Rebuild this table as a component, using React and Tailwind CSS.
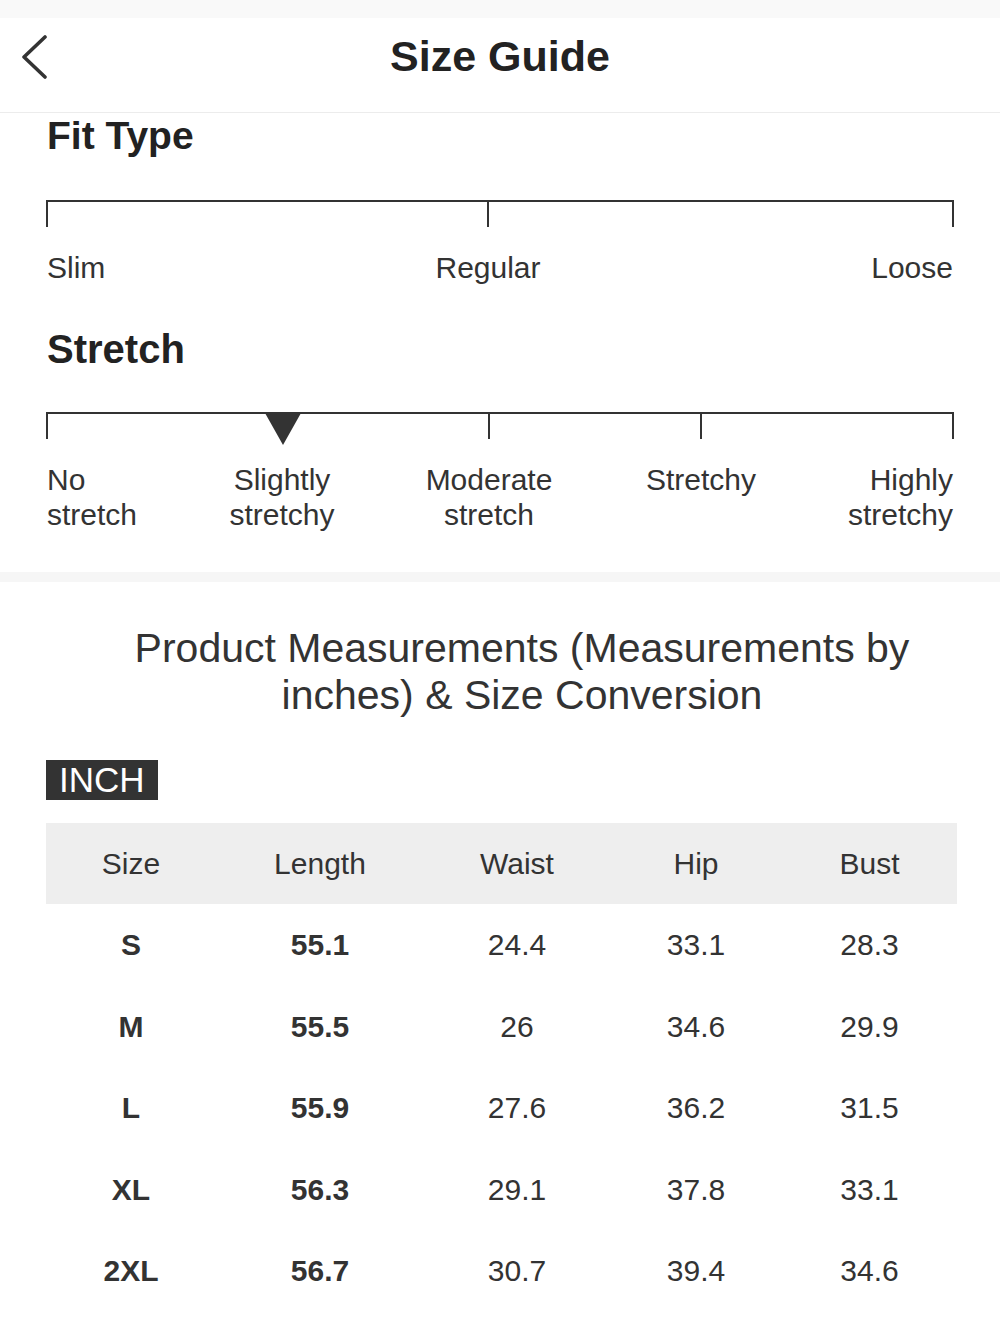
const font = { fontFamily: '"Liberation Sans", Arial, sans-serif' };

const rows = [
  ["S", "55.1", "24.4", "33.1", "28.3"],
  ["M", "55.5", "26", "34.6", "29.9"],
  ["L", "55.9", "27.6", "36.2", "31.5"],
  ["XL", "56.3", "29.1", "37.8", "33.1"],
  ["2XL", "56.7", "30.7", "39.4", "34.6"],
];

const cols = "grid grid-cols-[170px_208px_186px_172px_175px]";

function Scale({ ticks, marker }) {
  return (
    <svg width="908" height="34" viewBox="0 0 908 34" className="block">
      <line x1="0" y1="1" x2="908" y2="1" stroke="#333" strokeWidth="2" />
      {ticks.map((x) => (
        <line key={x} x1={x} y1="0" x2={x} y2="27" stroke="#333" strokeWidth="2" />
      ))}
      {marker != null && (
        <polygon points={`${marker - 18},1 ${marker + 18},1 ${marker},33`} fill="#333" />
      )}
    </svg>
  );
}

export default function App() {
  return (
    <div className="w-[1000px] min-h-[1333px] bg-white text-[#333]" style={font}>
      {/* top status strip */}
      <div className="h-[18px] bg-[#f9f9f9]" />

      {/* header */}
      <div className="relative h-[95px] border-b border-[#ececec] flex justify-center pt-[13px]">
        <svg
          className="absolute left-[20px] top-[17px]"
          width="30"
          height="44"
          viewBox="0 0 30 44"
          fill="none"
        >
          <polyline
            points="25,2 4,22 25,42"
            stroke="#333"
            strokeWidth="3.6"
            strokeLinecap="round"
            strokeLinejoin="round"
          />
        </svg>
        <h1 className="text-[43px] leading-[50px] font-bold text-[#222]">Size Guide</h1>
      </div>

      {/* fit + stretch */}
      <div className="px-[46px]">
        <h2 className="text-[39px] leading-[46px] font-bold text-[#222] pl-px">Fit Type</h2>
        <div className="mt-[41px]">
          <Scale ticks={[1, 442, 907]} />
        </div>
        <div className="relative h-[35px] mt-[16px] text-[30px] leading-[35px]">
          <span className="absolute left-px top-0">Slim</span>
          <span className="absolute left-[442px] top-0 -translate-x-1/2">Regular</span>
          <span className="absolute right-px top-0">Loose</span>
        </div>

        <h2 className="mt-[41px] text-[40px] leading-[46px] font-bold text-[#222] pl-px">Stretch</h2>
        <div className="mt-[40px]">
          <Scale ticks={[1, 443, 655, 907]} marker={237} />
        </div>
        <div className="relative h-[70px] mt-[16px] text-[30px] leading-[35px]">
          <span className="absolute left-px top-0">
            No
            <br />
            stretch
          </span>
          <span className="absolute left-[236px] top-0 -translate-x-1/2 text-center whitespace-nowrap">
            Slightly
            <br />
            stretchy
          </span>
          <span className="absolute left-[443px] top-0 -translate-x-1/2 text-center whitespace-nowrap">
            Moderate
            <br />
            stretch
          </span>
          <span className="absolute left-[655px] top-0 -translate-x-1/2 text-center whitespace-nowrap">
            Stretchy
          </span>
          <span className="absolute right-px top-0 text-right whitespace-nowrap">
            Highly
            <br />
            stretchy
          </span>
        </div>
      </div>

      <div className="mt-[40px] h-[10px] bg-[#f6f6f6]" />

      {/* measurements */}
      <div className="pt-[43px] pl-[44px] flex justify-center">
        <p className="w-[830px] text-center text-[41px] leading-[47px] text-[#333]">
          Product Measurements (Measurements by inches) &amp; Size Conversion
        </p>
      </div>

      <div className="ml-[46px] mt-[41px] inline-flex h-[40px] items-center bg-[#333] px-[13px] text-[35px] leading-[40px] text-white">
        INCH
      </div>

      <div className="ml-[46px] mt-[23px] w-[911px]">
        <div className={`${cols} h-[81px] items-center bg-[#eeeeee] text-[30px] text-center text-[#333]`}>
          <span>Size</span>
          <span>Length</span>
          <span>Waist</span>
          <span>Hip</span>
          <span>Bust</span>
        </div>
        {rows.map((r) => (
          <div key={r[0]} className={`${cols} h-[81.5px] items-center text-[30px] text-center text-[#333]`}>
            <span className="font-bold">{r[0]}</span>
            <span className="font-bold">{r[1]}</span>
            <span>{r[2]}</span>
            <span>{r[3]}</span>
            <span>{r[4]}</span>
          </div>
        ))}
      </div>
    </div>
  );
}
